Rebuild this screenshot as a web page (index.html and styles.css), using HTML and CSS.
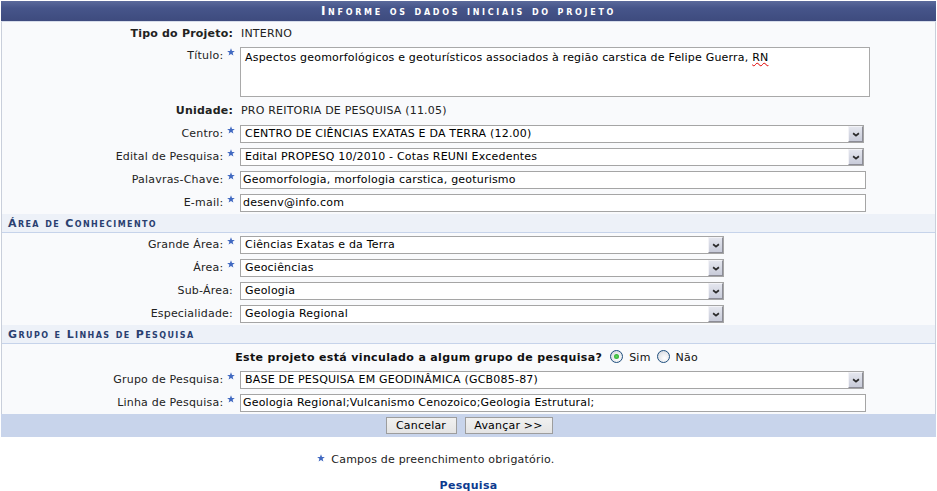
FILE: index.html
```html
<!DOCTYPE html>
<html lang="pt-BR">
<head>
<meta charset="utf-8">
<title>Informe os dados iniciais do projeto</title>
<link rel="stylesheet" href="styles.css">
</head>
<body>
<div class="form">
  <div class="caption">Informe os dados iniciais do projeto</div>

  <div class="row text-row first">
    <div class="label bold">Tipo do Projeto:</div>
    <div class="value">INTERNO</div>
  </div>

  <div class="row area-row">
    <div class="label">Título: <span class="req"><svg viewBox="0 0 10 10" width="8" height="8"><polygon points="5,0.3 6.3,3.6 9.8,3.7 7,5.9 8,9.5 5,7.4 2,9.5 3,5.9 0.2,3.7 3.7,3.6" /></svg></span></div>
    <div class="field"><div class="textarea">Aspectos geomorfológicos e geoturísticos associados à região carstica de Felipe Guerra, <span class="spell">RN</span></div></div>
  </div>

  <div class="row text-row unidade">
    <div class="label bold">Unidade:</div>
    <div class="value">PRO REITORIA DE PESQUISA (11.05)</div>
  </div>

  <div class="row">
    <div class="label">Centro: <span class="req"><svg viewBox="0 0 10 10" width="8" height="8"><polygon points="5,0.3 6.3,3.6 9.8,3.7 7,5.9 8,9.5 5,7.4 2,9.5 3,5.9 0.2,3.7 3.7,3.6" /></svg></span></div>
    <div class="field"><div class="select wide"><span class="sel-text">CENTRO DE CIÊNCIAS EXATAS E DA TERRA (12.00)</span><span class="arrow"><svg viewBox="0 0 9 6" width="9" height="6"><path d="M1 1.5 L4.5 4.5 L8 1.5" /></svg></span></div></div>
  </div>

  <div class="row">
    <div class="label">Edital de Pesquisa: <span class="req"><svg viewBox="0 0 10 10" width="8" height="8"><polygon points="5,0.3 6.3,3.6 9.8,3.7 7,5.9 8,9.5 5,7.4 2,9.5 3,5.9 0.2,3.7 3.7,3.6" /></svg></span></div>
    <div class="field"><div class="select wide"><span class="sel-text">Edital PROPESQ 10/2010 - Cotas REUNI Excedentes</span><span class="arrow"><svg viewBox="0 0 9 6" width="9" height="6"><path d="M1 1.5 L4.5 4.5 L8 1.5" /></svg></span></div></div>
  </div>

  <div class="row">
    <div class="label">Palavras-Chave: <span class="req"><svg viewBox="0 0 10 10" width="8" height="8"><polygon points="5,0.3 6.3,3.6 9.8,3.7 7,5.9 8,9.5 5,7.4 2,9.5 3,5.9 0.2,3.7 3.7,3.6" /></svg></span></div>
    <div class="field"><div class="input">Geomorfologia, morfologia carstica, geoturismo</div></div>
  </div>

  <div class="row last">
    <div class="label">E-mail: <span class="req"><svg viewBox="0 0 10 10" width="8" height="8"><polygon points="5,0.3 6.3,3.6 9.8,3.7 7,5.9 8,9.5 5,7.4 2,9.5 3,5.9 0.2,3.7 3.7,3.6" /></svg></span></div>
    <div class="field"><div class="input">desenv@info.com</div></div>
  </div>

  <div class="section">Área de Conhecimento</div>

  <div class="row sec-first">
    <div class="label">Grande Área: <span class="req"><svg viewBox="0 0 10 10" width="8" height="8"><polygon points="5,0.3 6.3,3.6 9.8,3.7 7,5.9 8,9.5 5,7.4 2,9.5 3,5.9 0.2,3.7 3.7,3.6" /></svg></span></div>
    <div class="field"><div class="select narrow"><span class="sel-text">Ciências Exatas e da Terra</span><span class="arrow"><svg viewBox="0 0 9 6" width="9" height="6"><path d="M1 1.5 L4.5 4.5 L8 1.5" /></svg></span></div></div>
  </div>

  <div class="row">
    <div class="label">Área: <span class="req"><svg viewBox="0 0 10 10" width="8" height="8"><polygon points="5,0.3 6.3,3.6 9.8,3.7 7,5.9 8,9.5 5,7.4 2,9.5 3,5.9 0.2,3.7 3.7,3.6" /></svg></span></div>
    <div class="field"><div class="select narrow"><span class="sel-text">Geociências</span><span class="arrow"><svg viewBox="0 0 9 6" width="9" height="6"><path d="M1 1.5 L4.5 4.5 L8 1.5" /></svg></span></div></div>
  </div>

  <div class="row">
    <div class="label nostar">Sub-Área:</div>
    <div class="field"><div class="select narrow"><span class="sel-text">Geologia</span><span class="arrow"><svg viewBox="0 0 9 6" width="9" height="6"><path d="M1 1.5 L4.5 4.5 L8 1.5" /></svg></span></div></div>
  </div>

  <div class="row last">
    <div class="label nostar">Especialidade:</div>
    <div class="field"><div class="select narrow"><span class="sel-text">Geologia Regional</span><span class="arrow"><svg viewBox="0 0 9 6" width="9" height="6"><path d="M1 1.5 L4.5 4.5 L8 1.5" /></svg></span></div></div>
  </div>

  <div class="section">Grupo e Linhas de Pesquisa</div>

  <div class="question">
    <span class="bold">Este projeto está vinculado a algum grupo de pesquisa?</span>
    <span class="radio checked"></span><span class="opt">Sim</span>
    <span class="radio"></span><span class="opt">Não</span>
  </div>

  <div class="row">
    <div class="label">Grupo de Pesquisa: <span class="req"><svg viewBox="0 0 10 10" width="8" height="8"><polygon points="5,0.3 6.3,3.6 9.8,3.7 7,5.9 8,9.5 5,7.4 2,9.5 3,5.9 0.2,3.7 3.7,3.6" /></svg></span></div>
    <div class="field"><div class="select wide"><span class="sel-text">BASE DE PESQUISA EM GEODINÂMICA (GCB085-87)</span><span class="arrow"><svg viewBox="0 0 9 6" width="9" height="6"><path d="M1 1.5 L4.5 4.5 L8 1.5" /></svg></span></div></div>
  </div>

  <div class="row last tight">
    <div class="label">Linha de Pesquisa: <span class="req"><svg viewBox="0 0 10 10" width="8" height="8"><polygon points="5,0.3 6.3,3.6 9.8,3.7 7,5.9 8,9.5 5,7.4 2,9.5 3,5.9 0.2,3.7 3.7,3.6" /></svg></span></div>
    <div class="field"><div class="input">Geologia Regional;Vulcanismo Cenozoico;Geologia Estrutural;</div></div>
  </div>

  <div class="buttons">
    <button class="btn cancel" type="button">Cancelar</button>
    <button class="btn next" type="button">Avançar &gt;&gt;</button>
  </div>
</div>

<div class="note"><span class="req"><svg viewBox="0 0 10 10" width="8" height="8"><polygon points="5,0.3 6.3,3.6 9.8,3.7 7,5.9 8,9.5 5,7.4 2,9.5 3,5.9 0.2,3.7 3.7,3.6" /></svg></span> Campos de preenchimento obrigatório.</div>

<div class="footer-link"><a href="#">Pesquisa</a></div>
</body>
</html>
```

FILE: styles.css
```css
html, body {
  margin: 0;
  padding: 0;
  background: #ffffff;
}

body {
  font-family: "DejaVu Sans", Verdana, sans-serif;
  font-size: 11px;
  letter-spacing: 0.2px;
  color: #222222;
  padding-top: 1px;
}

.form {
  width: 933px;
  margin-left: 1px;
  background: #f9fafc;
  border-left: 1px solid #c9cfdb;
  border-right: 1px solid #c9cfdb;
}

.caption {
  height: 20px;
  line-height: 20px;
  margin: 0 -1px;
  background: linear-gradient(#5b6a9b 0%, #46558a 35%, #3e4b7e 100%);
  border-bottom: 1px solid #d6dcea;
  color: #ffffff;
  font-weight: bold;
  font-variant: small-caps;
  letter-spacing: 2.7px;
  text-align: center;
  font-size: 12px;
}

.row {
  display: flex;
  align-items: flex-start;
  padding: 2px 0 3px;
}

.row.last {
  padding-bottom: 2px;
}

.row.sec-first {
  padding-top: 3px;
}

.label {
  width: 236px;
  flex: none;
  box-sizing: border-box;
  text-align: right;
  padding-right: 3px;
  line-height: 16px;
  padding-top: 1px;
  white-space: nowrap;
}

.label.nostar {
  padding-right: 5px;
}

.label.bold {
  font-weight: bold;
  padding-right: 5px;
}

.bold {
  font-weight: bold;
}

.req {
  display: inline-block;
  width: 8px;
  height: 8px;
  vertical-align: top;
  margin-top: 0;
  margin-left: 0;
}

.req svg {
  display: block;
  fill: #4169c1;
}

.field {
  flex: none;
  padding-left: 2px;
}

.value {
  padding-left: 3px;
  line-height: 14px;
}

.text-row.first {
  padding: 5px 0 4px;
}

.text-row .label {
  padding-top: 0;
  line-height: 14px;
}

.text-row.unidade {
  padding: 2px 0 5px;
}

.area-row {
  padding: 2px 0 5px;
}

.textarea {
  box-sizing: border-box;
  width: 630px;
  height: 50px;
  background: #ffffff;
  border: 1px solid #a9a9a9;
  padding: 3px 4px;
  line-height: 14px;
  color: #000000;
}

.spell {
  text-decoration: underline wavy #e00000;
  text-decoration-thickness: 1px;
}

.select {
  box-sizing: border-box;
  height: 18px;
  display: flex;
  align-items: center;
  background: #ffffff;
  border: 1px solid #a5a5a5;
  color: #000000;
}

.select.wide {
  width: 624px;
}

.select.narrow {
  width: 484px;
}

.sel-text {
  flex: 1;
  padding-left: 4px;
  white-space: nowrap;
  overflow: hidden;
  line-height: 16px;
}

.arrow {
  width: 15px;
  height: 16px;
  box-sizing: border-box;
  background: linear-gradient(#e4e6ee, #c8cbd9);
  border-left: 1px solid #f3f3f7;
  border-top: 1px solid #f3f3f7;
  border-right: 1px solid #8c8c96;
  border-bottom: 1px solid #8c8c96;
  display: flex;
  align-items: center;
  justify-content: center;
}

.arrow svg {
  width: 8px;
  height: 5px;
}

.arrow svg path {
  fill: none;
  stroke: #2a2a2a;
  stroke-width: 2;
}

.input {
  box-sizing: border-box;
  width: 626px;
  height: 18px;
  background: #ffffff;
  border: 1px solid #a5a5a5;
  padding-left: 2px;
  line-height: 16px;
  color: #000000;
  white-space: nowrap;
}

.section {
  height: 18px;
  line-height: 19px;
  background: #edf1f8;
  border-bottom: 1px solid #c6d3ea;
  color: #2a3f70;
  font-weight: bold;
  font-variant: small-caps;
  letter-spacing: 1.4px;
  padding-left: 6px;
}

.question {
  display: flex;
  align-items: center;
  justify-content: center;
  height: 24px;
  padding-top: 1px;
  padding-left: 2px;
  color: #111111;
}

.question .bold {
  margin-right: 8px;
  letter-spacing: 0.35px;
}

.radio {
  display: inline-block;
  width: 11px;
  height: 11px;
  border-radius: 50%;
  border: 1px solid #1f4f7e;
  background: radial-gradient(circle at 60% 65%, #ffffff 0%, #e6e8ec 55%, #c8ccd4 100%);
  position: relative;
  margin-right: 6px;
  margin-bottom: 2px;
}

.radio.checked::after {
  content: "";
  position: absolute;
  left: 3px;
  top: 3px;
  width: 5px;
  height: 5px;
  border-radius: 50%;
  background: radial-gradient(circle, #5cd65c 0%, #21a121 100%);
}

.opt {
  margin-right: 6px;
}

.buttons {
  height: 23px;
  background: #c8d4eb;
  display: flex;
  justify-content: center;
  align-items: flex-start;
  gap: 8px;
  padding-left: 1px;
  margin: 0 -1px;
  box-sizing: border-box;
}

.btn {
  margin-top: 3px;
  height: 17px;
  box-sizing: border-box;
  font-family: "DejaVu Sans", Verdana, sans-serif;
  font-size: 11px;
  letter-spacing: 0.2px;
  color: #000000;
  background: linear-gradient(#f1f1f1, #e4e4e4);
  border: 1px solid #9d9d9d;
  padding: 0;
  line-height: 15px;
}

.btn.cancel {
  width: 71px;
}

.btn.next {
  width: 88px;
}

.note {
  text-align: center;
  margin-top: 16px;
  padding-right: 66px;
  line-height: 14px;
}

.note .req {
  margin-top: 1px;
  margin-right: 3px;
}

.footer-link {
  text-align: center;
  margin-top: 12px;
  line-height: 14px;
}

.footer-link a {
  color: #0c3a8f;
  font-weight: bold;
  text-decoration: none;
  letter-spacing: 0.3px;
}
```
